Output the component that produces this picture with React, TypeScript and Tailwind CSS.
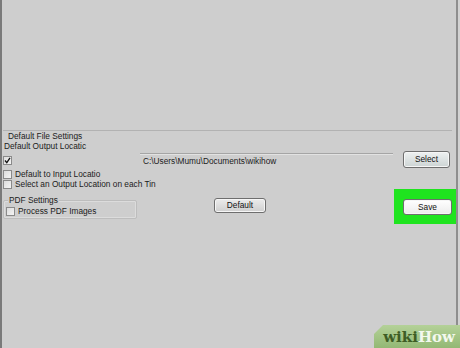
import React from 'react';

const font = { fontFamily: '"Liberation Sans", Arial, sans-serif' };

const Check = ({ checked = false }: { checked?: boolean }) => (
  <div className="w-[9px] h-[9px] border border-[#8a8a8a] bg-gradient-to-br from-[#dcdcdc] to-[#f4f4f4] flex items-center justify-center shrink-0">
    {checked && (
      <svg width="7" height="7" viewBox="0 0 7 7">
        <path d="M1 3.5 L2.8 5.6 L6 0.8" stroke="#111" strokeWidth="1.3" fill="none" />
      </svg>
    )}
  </div>
);

const Btn = ({ label, className }: { label: string; className: string }) => (
  <div
    className={`flex items-center justify-center border border-[#6e6e6e] rounded-[3px] text-[8.3px] text-[#111] shadow-[inset_0_0_0_1px_#f6f6f6] ${className}`}
  >
    {label}
  </div>
);

const App = () => {
  return (
    <div className="relative w-[460px] h-[348px] overflow-hidden flex bg-[#cecece] text-[#1b1b1b]" style={font}>
      <div className="w-[2px] bg-[#7a7a7a]" />

      {/* main window area */}
      <div className="flex-1 flex flex-col pt-[130px] text-[8.3px]">
        {/* Default File Settings group */}
        <div className="h-px bg-[#b2b2b2] ml-[1px] mr-[4px]" />
        <div className="h-[10px] leading-[10px] pl-[6px]">Default File Settings</div>
        <div className="h-[10px] leading-[10px] pl-[2px]">Default Output Locatic</div>

        <div className="flex h-[18px]">
          <div className="w-[138px] pl-[1px] pt-[5px]">
            <Check checked />
          </div>
          <div className="w-[253px] pt-[2px]">
            <div className="h-px bg-[#a5a5a5]" />
            <div className="h-px bg-[#e2e2e2]" />
            <div className="pl-[3px] leading-[10px] pt-[1px]">C:\Users\Mumu\Documents\wikihow</div>
          </div>
          <div className="w-[10px]" />
          <Btn label="Select" className="w-[47px] h-[17px] bg-gradient-to-b from-[#eef1f1] to-[#cdd4d4]" />
        </div>

        <div className="flex items-center gap-[3px] h-[10px] pl-[1px]">
          <Check />
          <span className="leading-[10px]">Default to Input Locatio</span>
        </div>
        <div className="flex items-center gap-[3px] h-[10px] pl-[1px]">
          <Check />
          <span className="leading-[10px]">Select an Output Location on each Tin</span>
        </div>

        {/* bottom row */}
        <div className="flex h-[35px]">
          <div className="ml-[1px] mt-[11px] w-[134px] h-[19px] border border-[#bdbdbd] rounded-[2px] shadow-[inset_0_0_0_1px_#dcdcdc]">
            <div className="-mt-[6px] ml-[4px] w-fit px-[1px] bg-[#cecece] leading-[10px]">PDF Settings</div>
            <div className="flex items-center gap-[3px] pl-[2px] mt-[1px]">
              <Check />
              <span className="leading-[10px]">Process PDF Images</span>
            </div>
          </div>
          <Btn
            label="Default"
            className="ml-[77px] mt-[9px] w-[52px] h-[15px] bg-gradient-to-b from-[#ececec] to-[#cfcfcf]"
          />
          <div className="ml-auto w-[62px] h-[35px] bg-[#1fe41f] pl-[9px] pt-[10px]">
            <Btn label="Save" className="w-[49px] h-[16px] bg-gradient-to-b from-[#ffffff] to-[#ececec]" />
          </div>
        </div>
      </div>

      <div className="w-[2px] bg-[#8e8e8e]" />
      <div className="w-[2px] bg-[#d2d2d2]" />

      {/* wikiHow watermark */}
      <div
        className="absolute right-0 bottom-0 w-[86px] h-[23px] bg-gradient-to-b from-[#b4d198] to-[#93b874] flex items-center justify-end pr-[5px] pt-[2px]"
        style={{ clipPath: 'polygon(9px 0, 100% 0, 100% 100%, 0 100%, 0 9px)' }}
      >
        <span className="text-[15px] font-bold leading-none" style={{ fontFamily: '"DejaVu Serif", "Liberation Serif", serif' }}>
          <span className="text-[#3e5d25]">wiki</span>
          <span className="text-[#f3f8ee]">How</span>
        </span>
      </div>
    </div>
  );
};

export default App;
